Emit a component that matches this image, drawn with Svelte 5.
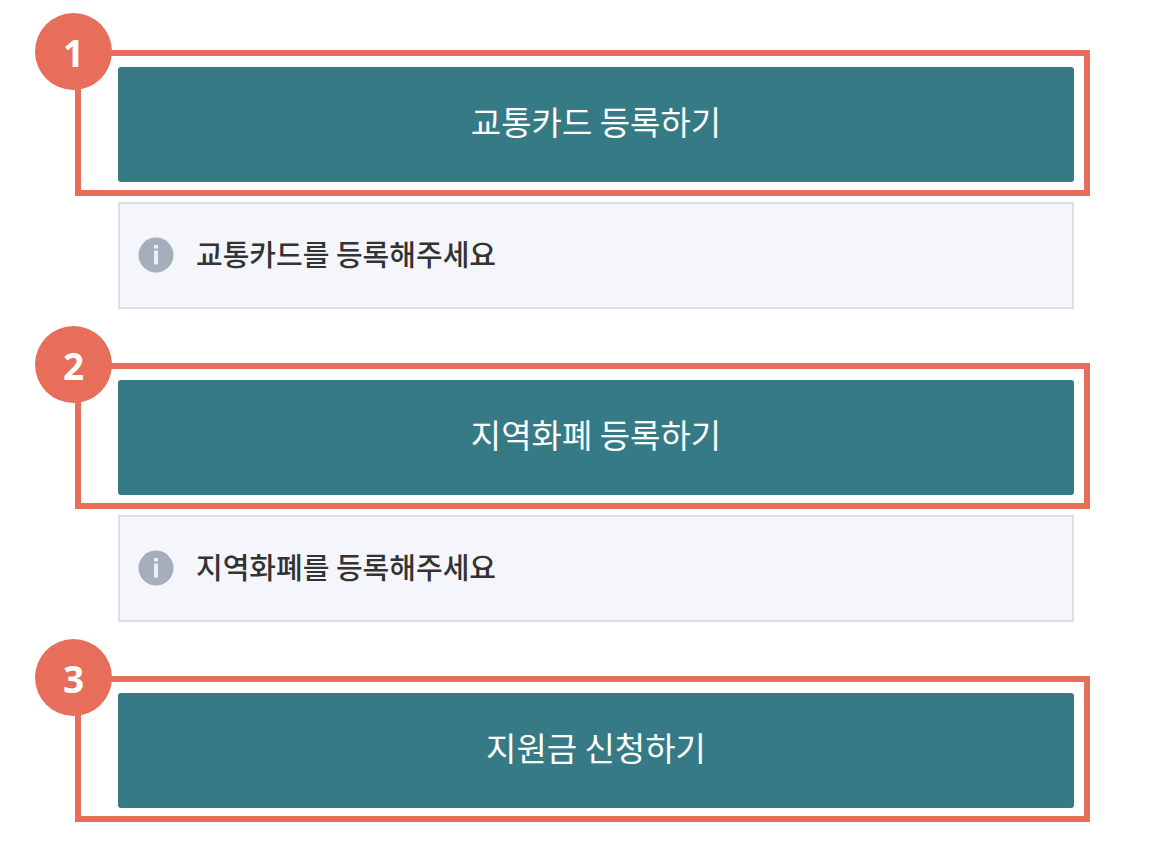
<script lang="ts">
  interface Step {
    action: string;
    notice?: string;
  }

  const steps: Step[] = [
    { action: '교통카드 등록하기', notice: '교통카드를 등록해주세요' },
    { action: '지역화폐 등록하기', notice: '지역화폐를 등록해주세요' },
    { action: '지원금 신청하기' },
  ];
</script>

<main class="steps">
  {#each steps as step, i}
    <section class="step">
      <div class="frame">
        <span class="badge">{i + 1}</span>
        <button type="button" class="action">{step.action}</button>
      </div>
      {#if step.notice}
        <div class="notice">
          <svg class="icon" viewBox="0 0 36 36" aria-hidden="true">
            <circle cx="18" cy="18" r="17.5" fill="#a7aebb" />
            <rect x="16" y="8" width="4" height="3.5" rx="0.5" fill="#eceef4" />
            <rect x="16" y="13.5" width="4" height="14" rx="0.5" fill="#eceef4" />
          </svg>
          <p>{step.notice}</p>
        </div>
      {/if}
    </section>
  {/each}
</main>

<style>
  :global(body) {
    margin: 0;
    background: #fff;
  }

  .steps {
    display: flex;
    flex-direction: column;
    gap: 54px;
    padding: 50px 66px 46px 75px;
    font-family: 'Noto Sans CJK JP', 'Noto Sans CJK SC', sans-serif;
  }

  .step {
    display: flex;
    flex-direction: column;
    gap: 6px;
  }

  .frame {
    position: relative;
    display: flex;
    padding: 11px 10px 8px 37px;
    border: 6px solid #e66e5b;
  }

  /* sits over the top left corner of the frame */
  .badge {
    position: absolute;
    top: -43px;
    left: -46px;
    box-sizing: border-box;
    width: 77px;
    height: 77px;
    padding-top: 1px;
    border-radius: 50%;
    background: #e66e5b;
    color: #fff;
    font-family: 'Noto Sans', sans-serif;
    font-size: 37px;
    font-weight: 700;
    line-height: 77px;
    text-align: center;
  }

  .action {
    flex: 1;
    height: 115px;
    padding: 0 0 7px;
    border: 0;
    border-radius: 3px;
    background: #367a86;
    color: #fff;
    font-family: inherit;
    font-size: 33px;
    line-height: 48px;
    cursor: pointer;
  }

  .notice {
    display: flex;
    align-items: center;
    gap: 22px;
    margin: 0 16px 0 43px;
    padding: 29px 18px 30px;
    border: 2px solid #dddfe6;
    background: #f5f6fb;
  }

  .icon {
    flex: none;
    width: 36px;
    height: 36px;
  }

  p {
    margin: 0;
    padding-bottom: 4px;
    color: #333;
    font-size: 29px;
    font-weight: 500;
    line-height: 40px;
  }
</style>
